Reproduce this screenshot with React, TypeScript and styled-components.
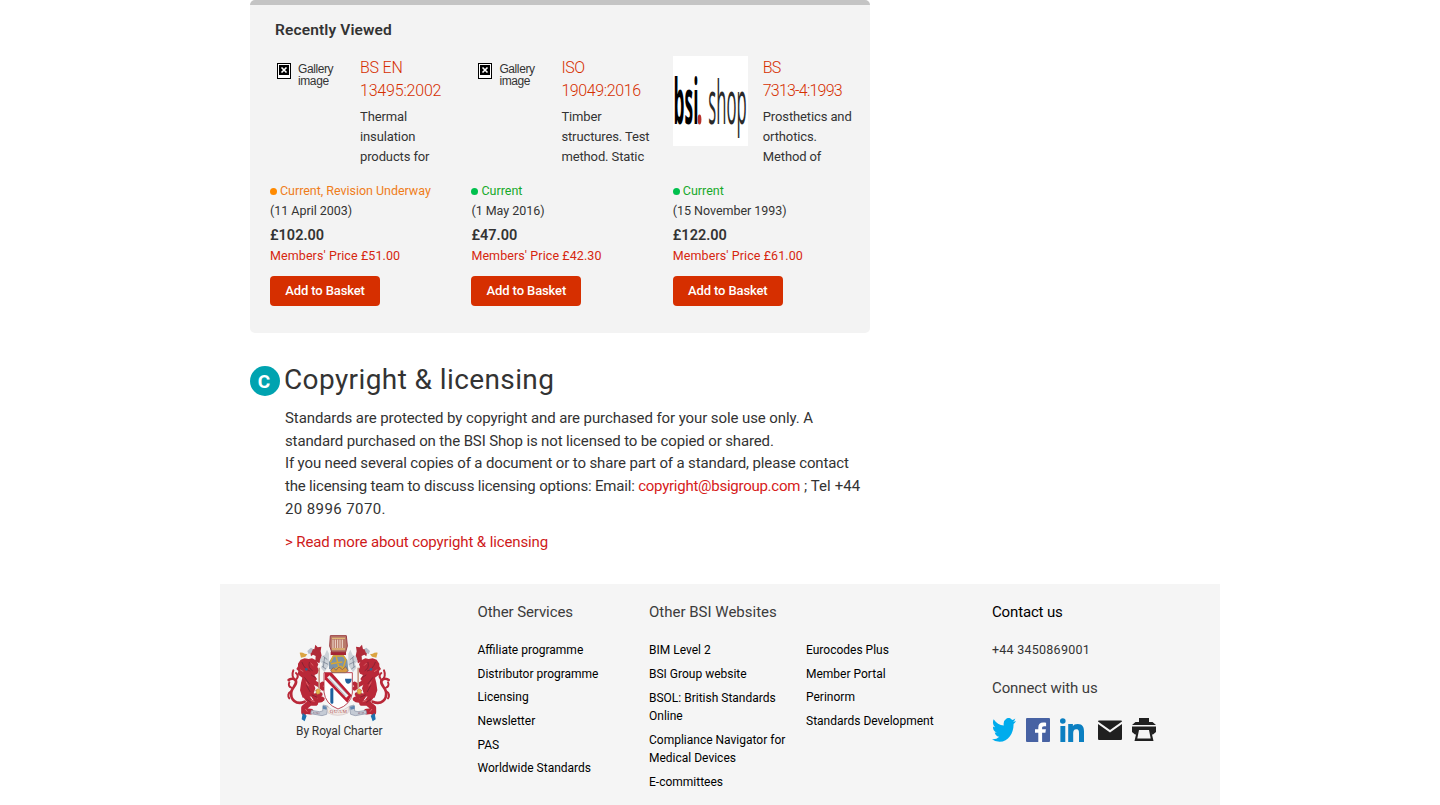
import React from "react";
import styled, { createGlobalStyle } from "styled-components";

const GlobalStyle = createGlobalStyle`
  * { box-sizing: border-box; }
  html, body { margin: 0; padding: 0; background: #fff; }
  body {
    height: 805px;
    overflow: hidden;
    font-family: Roboto, "Liberation Sans", sans-serif;
    color: #333;
  }
  a { color: inherit; text-decoration: none; }
  h2, h3, p, ul { margin: 0; padding: 0; font-weight: 400; }
  ul { list-style: none; }
`;

const Page = styled.div`
  width: 1000px;
  height: 805px;
  margin: 0 auto;
  display: flex;
  flex-direction: column;
`;

const Main = styled.main`
  width: 620px;
  margin-left: 30px;
  height: 584px;
  flex: none;
`;

const Panel = styled.section`
  height: 333px;
  background: #f3f3f3;
  border-top: 5px solid #c4c4c4;
  border-radius: 5px;
  padding: 13px 0 0 20px;
`;

const PanelTitle = styled.h2`
  font-size: 15.5px;
  line-height: 24px;
  font-weight: 600;
  padding-left: 5px;
  letter-spacing: 0.13px;
  margin-bottom: 14px;
`;

const Products = styled.div`
  display: grid;
  grid-template-columns: repeat(3, 201.4px);
`;

const ProductTop = styled.div`
  display: flex;
  height: 125px;
`;

const Thumb = styled.div`
  width: 75px;
  height: 90px;
  margin-right: 15px;
  flex: none;
`;

const Missing = styled.div`
  display: flex;
  gap: 7px;
  padding: 7px 0 0 7px;
  font: 12px/12px "Liberation Sans", sans-serif;
  letter-spacing: -0.4px;
`;

const ProductName = styled.h3<{ $ls: number }>`
  font-size: 16px;
  font-weight: 300;
  line-height: 23px;
  color: #d62f00;
  white-space: pre;
  letter-spacing: ${(p) => p.$ls}px;
  margin-bottom: 5px;
`;

const ProductText = styled.p`
  font-size: 13px;
  line-height: 20px;
  white-space: pre;
  letter-spacing: -0.12px;
`;

const Status = styled.div<{ $color: string; $ls: number }>`
  display: flex;
  align-items: center;
  gap: 3px;
  height: 20px;
  font-size: 12.5px;
  line-height: 19px;
  padding-bottom: 1px;
  color: ${(p) => p.$color};
  letter-spacing: ${(p) => p.$ls}px;
`;

const Dot = styled.span<{ $color: string }>`
  width: 7px;
  height: 7px;
  margin-top: 2px;
  border-radius: 50%;
  background: ${(p) => p.$color};
`;

const DateLine = styled.p`
  font-size: 12.5px;
  line-height: 20px;
  letter-spacing: -0.03px;
`;

const Price = styled.p`
  font-size: 14.5px;
  font-weight: 600;
  line-height: 24px;
  padding-top: 3px;
`;

const MemberPrice = styled.p`
  font-size: 12.5px;
  line-height: 17px;
  letter-spacing: 0.09px;
  margin: -1px 0 12px;
  color: #d6260f;
`;

const Button = styled.button`
  display: block;
  width: 110px;
  height: 30px;
  padding: 0 0 2px;
  border: 0;
  border-radius: 4px;
  background: #d62f00;
  color: #fff;
  font: 500 13px Roboto, sans-serif;
  letter-spacing: -0.12px;
`;

const CopyrightHead = styled.div`
  display: flex;
  align-items: center;
  gap: 4px;
  height: 30px;
  margin-top: 33px;
`;

const Badge = styled.span`
  width: 30px;
  height: 30px;
  border-radius: 50%;
  background: #00a3b0;
  color: #fff;
  font-size: 19px;
  font-weight: 700;
  line-height: 31px;
  padding-right: 2px;
  text-align: center;
`;

const Heading = styled.h2`
  font-size: 28px;
  line-height: 28px;
  letter-spacing: 0.4px;
  padding-bottom: 2px;
  white-space: nowrap;
`;

const Copy = styled.div`
  margin: 11px 0 0 35px;
`;

const CopyLine = styled.p<{ $ls: number }>`
  font-size: 15px;
  line-height: 22.7px;
  white-space: nowrap;
  letter-spacing: ${(p) => p.$ls}px;
`;

const Red = styled.a`
  color: #d6201a;
  letter-spacing: -0.26px;
`;

const Tail = styled.span`
  letter-spacing: 0.1px;
`;

const More = styled.p`
  font-size: 15px;
  line-height: 22px;
  margin-top: 10px;
  letter-spacing: -0.125px;
  color: #cf1a1a;
`;

const Footer = styled.footer`
  flex: 1;
  background: #f5f5f5;
  display: grid;
  grid-template-columns: 257.5px 171.5px 157px 186px 1fr;
`;

const Charter = styled.div`
  padding: 50px 0 0 66px;
`;

const CharterText = styled.p`
  font-size: 12px;
  line-height: 14px;
  padding-left: 10px;
  letter-spacing: -0.1px;
`;

const Column = styled.div<{ $top?: number }>`
  padding-top: ${(p) => p.$top ?? 16}px;
`;

const ColumnTitle = styled.h3<{ $dark?: boolean; $ls?: number }>`
  font-size: 15px;
  line-height: 24px;
  white-space: nowrap;
  color: ${(p) => (p.$dark ? "#000" : "#3c3c3c")};
  letter-spacing: ${(p) => p.$ls ?? 0}px;
`;

const Links = styled.ul`
  padding-top: 17.3px;
`;

const LinkItem = styled.li<{ $gap: number }>`
  font-size: 12px;
  line-height: 18px;
  margin-bottom: ${(p) => p.$gap}px;
  color: #000;
  white-space: pre;
`;

const Phone = styled.p`
  font-size: 12.5px;
  line-height: 18px;
  margin: 17px 0;
  letter-spacing: 0.25px;
`;

const Social = styled.div`
  display: flex;
  gap: 10px;
  margin-top: 18px;
  svg { display: block; }
  svg:nth-child(4) { margin-left: 4px; }
`;

const BrokenImage = () => (
  <svg width="14" height="16" viewBox="0 0 14 16" shapeRendering="crispEdges">
    <path fill="#000" d="M0 0h14v16H0z" />
    <path fill="#fff" d="M1 1h12v14H1z" />
    <path fill="#000" d="M2 2h10v10H2z" />
    <path d="M4.500 4.500l5 5M9.500 4.500l-5 5" stroke="#fff" strokeWidth="1.6" shapeRendering="auto" />
  </svg>
);

const ShopLogo = () => (
  <svg width="75" height="90" viewBox="0 0 75 90">
    <path fill="#fff" d="M0 0h75v90H0z" />
    <g fontFamily="Open Sans, sans-serif">
      <text transform="translate(.6 68) scale(.275 1)" fontSize="63" fontWeight="700" fill="#000">bsi</text>
      <ellipse cx="26.5" cy="63.500" rx="1.9" ry="5" fill="#b7322c" />
      <text transform="translate(35.300 68) scale(.278 1)" fontSize="60" fontWeight="400" fill="#2a2a2a">shop</text>
    </g>
  </svg>
);

const Supporter = () => (
  <g>
    <g fill="none" stroke="#b92838" strokeLinecap="round" strokeLinejoin="round">
      <path d="M106 244C80 256 62 236 66 214c2-12 17-20 14-32-3-9-17-8-22-3" strokeWidth="8" />
      <path d="M80 182c-10-8-14-18-8-32M82 176c6-8 3-14-2-18M60 186c-4 8 0 14 6 16M64 214c-8 4-9 14-4 20" strokeWidth="6" />
      <path d="M126 182 152 196 160 190M150 196l10 8" strokeWidth="13" />
      <path d="M116 212 132 226 154 222M140 226l20 10M132 228l10 14 14-2" strokeWidth="12" />
      <path d="M106 222 124 246 104 262 104 276M106 272l18 2M122 248l16 0" strokeWidth="17" />
    </g>
    <path d="m86 130 8-12 12-4 12 2 10-2 12 6 7 12-3 8 5 10-5 10-9 4 8 12-10 14 5 14-8 24-30 4-8-22 3-22 4-16-14-10 2-10-6-6 5-8z" fill="#b92838" />
    <path d="M98 126q8 22 24 26m-2-26q-5 17 9 25m-23 21 14 18m6-26 12 8m-26 24 10 18m6 10 14 6m-30 6 12 10" fill="none" stroke="#7f2233" strokeWidth="2.500" strokeLinecap="round" />
    <path d="m92 148 10 6m22-26 8 8m-22 48 8 14m6 42 12 4m2-34 12 2m-42 54 6 8" stroke="#dc6268" strokeWidth="3" />
    <circle cx="111" cy="147" r="4" fill="#35608e" />
    <path d="m147 142 5 0v60l-5 2z" fill="#c99a86" />
    <path d="M141 208q7-7 12 2l-2 10-8 2-3-6z" fill="#e5b64c" stroke="#a97a3a" strokeWidth="1.500" />
    <path d="M122 92q4-8 13-5l3-14 7 8 11-2-2 14 3 14-7 22-12-6 1-16-8-4-6 5z" fill="#b02a38" />
    <path d="M91 97q9-1 15 3l8 2-6 7-13 3z" fill="#dba542" />
    <path d="m114 92 11-10 6 4-5 12-8 3z" fill="#b5bcc8" />
    <path d="m156 108 10-4 7-16 6 12 0 34-14 22-10-14 4-12-8-8z" fill="#ccd2d8" />
    <path d="m162 108 12 10m-14 6 16 8m-18 6 12 8m-4-36-4 30" stroke="#7d8796" strokeWidth="2.500" />
    <path d="M126 270l24 4 10-2 2-18 14 4-4 24-14 4-34-6z" fill="#c5cbd5" stroke="#8690a4" strokeWidth="2" />
    <path d="m132 277 20 2" stroke="#9a7f90" strokeWidth="5" strokeDasharray="2 2" />
    <path d="M160 256l14 3-2 9-12-3z" fill="#5f86b0" />
    <path d="m100 278 12 8-6 17-9-6z" fill="#1d72ae" />
  </g>
);

const Crest = () => (
  <svg width="107" height="90" viewBox="50 41 321 270" style={{ display: "block" }}>
    <Supporter />
    <g transform="translate(416 0) scale(-1 1)"><Supporter /></g>
    <path d="M164 157h85v61q-5 35-43 48-38-15-42-51z" fill="#fff" stroke="#ad2837" strokeWidth="2.500" />
    <path d="m166 157 22 1 59 67-13 22-68-70z" fill="#be2035" />
    <path d="m177 168 57 61" stroke="#eef0f2" strokeWidth="10" />
    <path d="m184 168 49 53m-54-47 49 53" stroke="#8b93a3" strokeWidth="2" />
    <path d="M227 175h20q-1 14-10 15-9 0-10-15zM183 206q6-6 9 0v42q-6 6-9-2z" fill="#20619d" />
    <path d="M179 145v-20l15-23h27l13 17 3 30-21 9-20-4z" fill="#7d93a8" />
    <path d="m183 126 9-19h30l7 11-8 27-25 8m4-47 10 42m-25-18 34-5m-28 23 24-10 15 17" fill="none" stroke="#dba82e" strokeWidth="4.500" />
    <path d="m184 150 8-8 8 8 9-10 10 8 10-9 8 13-9 5h-40z" fill="#d99a42" stroke="#755765" strokeWidth="2" />
    <path d="M184 104h46v-10h-46z" fill="#a72434" />
    <path d="M183 46h48l3 31-5 18h-42l-6-18z" fill="#b8796a" stroke="#9c3d42" strokeWidth="3" />
    <path d="M188 54h39M188 86h39" stroke="#dfba76" strokeWidth="4" />
    <path d="M191 58v25m7-25v25m7-25v25m7-25v25m7-25v25" stroke="#f2ded0" strokeWidth="3" />
    <path d="M172 258q34 27 68 0l-4 20q-32 14-60 0z" fill="#f0e8e4" stroke="#c9b4b4" strokeWidth="1.500" />
    <text x="181" y="279" fontSize="15" letterSpacing="2" fill="#b0525a" fontFamily="Liberation Serif, serif">QUAM</text>
  </svg>
);

const Twitter = () => (
  <svg width="24" height="24" viewBox="0 0 24 24">
    <path fill="#00aced" d="M23.953 4.57a10 10 0 0 1-2.825.775 4.958 4.958 0 0 0 2.163-2.723c-.951.555-2.005.959-3.127 1.184a4.92 4.92 0 0 0-8.384 4.482C7.69 8.095 4.067 6.13 1.64 3.162a4.822 4.822 0 0 0-.666 2.475c0 1.71.87 3.213 2.188 4.096a4.904 4.904 0 0 1-2.228-.616v.06a4.923 4.923 0 0 0 3.946 4.827 4.996 4.996 0 0 1-2.212.085 4.936 4.936 0 0 0 4.604 3.417 9.867 9.867 0 0 1-6.102 2.105c-.39 0-.779-.023-1.17-.067a13.995 13.995 0 0 0 7.557 2.209c9.053 0 13.998-7.496 13.998-13.985 0-.21 0-.42-.015-.63A9.935 9.935 0 0 0 24 4.59z" transform="translate(0 -2.7) scale(1 1.22)" />
  </svg>
);

const Facebook = () => (
  <svg width="24" height="24" viewBox="0 0 24 24">
    <rect width="24" height="24" rx="1" fill="#4762a3" />
    <path fill="#fff" d="M12.300 24v-9.200H9v-3.500h3.300V9.500c0-3.400 1.800-4.900 4.900-4.900 1.400 0 2.500.1 2.900.2v3.400h-2c-1.600 0-2 .7-2 1.800v1.300h3.800l-.5 3.500h-3.300V24z" />
  </svg>
);

const LinkedIn = () => (
  <svg width="24" height="24" viewBox="0 0 24 24" fill="#0b7fc1">
    <circle cx="2.8" cy="3" r="2.8" />
    <path d="M.4 8h4.900v16H.4zM8.200 6h4.700v2.200c.7-1.300 2.300-2.100 4.800-2.100 5 0 6.300 3.200 6.300 7.500V24h-5v-8.700c0-2.200-.2-4.100-2.700-4.100s-3.100 2-3.100 4.100V24h-5z" />
  </svg>
);

const Mail = () => (
  <svg width="24" height="24" viewBox="0 0 24 24" fill="#202020">
    <path d="M1 2.500h22q1 0 1 1L12 12 0 3.500q0-1 1-1z" />
    <path d="m0 6 12 8.500L24 6v14.500q0 1.500-1 1.500H1q-1 0-1-1.500z" />
  </svg>
);

const Printer = () => (
  <svg width="24" height="24" viewBox="0 0 24 24" fill="#202020">
    <path d="M7 0h10v4h3.500L24 7H0L3.500 4H7z" />
    <path d="M0 8.500h24V14l-3 2.500h-1.500L18.500 12h-13L4.500 16.500H3L0 14z" />
    <path fillRule="evenodd" d="M5.500 10h13L21.500 23h-19zM7 12 5.300 20.500h13.400L17 12z" />
  </svg>
);

type Product = {
  name: string;
  nameLs: number;
  text: string;
  status: string;
  statusLs: number;
  color: string;
  dot: string;
  date: string;
  price: string;
  member: string;
  logo?: boolean;
};

const products: Product[] = [
  { name: "BS EN\n13495:2002", nameLs: -0.2, text: "Thermal\ninsulation\nproducts for", status: "Current, Revision Underway", statusLs: -0.03, color: "#ef7d1a", dot: "#ff8a00", date: "(11 April 2003)", price: "£102.00", member: "£51.00" },
  { name: "ISO\n19049:2016", nameLs: -0.4, text: "Timber\nstructures. Test\nmethod. Static", status: "Current", statusLs: 0, color: "#16a92a", dot: "#00c04d", date: "(1 May 2016)", price: "£47.00", member: "£42.30" },
  { name: "BS\n7313-4:1993", nameLs: -0.8, text: "Prosthetics and\northotics.\nMethod of", status: "Current", statusLs: 0, color: "#16a92a", dot: "#00c04d", date: "(15 November 1993)", price: "£122.00", member: "£61.00", logo: true },
];

const ProductCard = ({ p }: { p: Product }) => (
  <article>
    <ProductTop>
      <Thumb>
        {p.logo ? <ShopLogo /> : <Missing><BrokenImage /><span>Gallery<br />image</span></Missing>}
      </Thumb>
      <div>
        <ProductName $ls={p.nameLs}>{p.name}</ProductName>
        <ProductText>{p.text}</ProductText>
      </div>
    </ProductTop>
    <Status $color={p.color} $ls={p.statusLs}><Dot $color={p.dot} />{p.status}</Status>
    <DateLine>{p.date}</DateLine>
    <Price>{p.price}</Price>
    <MemberPrice>Members' Price {p.member}</MemberPrice>
    <Button>Add to Basket</Button>
  </article>
);

const services = ["Affiliate programme", "Distributor programme", "Licensing", "Newsletter", "PAS", "Worldwide Standards"];
const sites = ["BIM Level 2", "BSI Group website", "BSOL: British Standards\nOnline", "Compliance Navigator for\nMedical Devices", "E-committees"];
const moreSites = ["Eurocodes Plus", "Member Portal", "Perinorm", "Standards Development"];

const LinkList = ({ items, gap = 5.6 }: { items: string[]; gap?: number }) => (
  <Links>{items.map((t) => <LinkItem key={t} $gap={gap}><a href="#">{t}</a></LinkItem>)}</Links>
);

export default function App() {
  return (
    <>
      <GlobalStyle />
      <Page>
        <Main>
          <Panel>
            <PanelTitle>Recently Viewed</PanelTitle>
            <Products>{products.map((p) => <ProductCard key={p.name} p={p} />)}</Products>
          </Panel>
          <CopyrightHead>
            <Badge>C</Badge>
            <Heading>Copyright &amp; licensing</Heading>
          </CopyrightHead>
          <Copy>
            <CopyLine $ls={-0.09}>Standards are protected by copyright and are purchased for your sole use only. A</CopyLine>
            <CopyLine $ls={-0.13}>standard purchased on the BSI Shop is not licensed to be copied or shared.</CopyLine>
            <CopyLine $ls={-0.135}>If you need several copies of a document or to share part of a standard, please contact</CopyLine>
            <CopyLine $ls={-0.18}>the licensing team to discuss licensing options: Email: <Red href="#">copyright@bsigroup.com</Red><Tail> ; Tel +44</Tail></CopyLine>
            <CopyLine $ls={0.4}>20 8996 7070.</CopyLine>
            <More><a href="#">&gt; Read more about copyright &amp; licensing</a></More>
          </Copy>
        </Main>
        <Footer>
          <Charter>
            <Crest />
            <CharterText>By Royal Charter</CharterText>
          </Charter>
          <Column>
            <ColumnTitle $ls={-0.1}>Other Services</ColumnTitle>
            <LinkList items={services} />
          </Column>
          <Column>
            <ColumnTitle>Other BSI Websites</ColumnTitle>
            <LinkList items={sites} gap={5.9} />
          </Column>
          <Column $top={40}>
            <LinkList items={moreSites} />
          </Column>
          <Column>
            <ColumnTitle $dark $ls={-0.15}>Contact us</ColumnTitle>
            <Phone>+44 3450869001</Phone>
            <ColumnTitle $ls={-0.1}>Connect with us</ColumnTitle>
            <Social><Twitter /><Facebook /><LinkedIn /><Mail /><Printer /></Social>
          </Column>
        </Footer>
      </Page>
    </>
  );
}
